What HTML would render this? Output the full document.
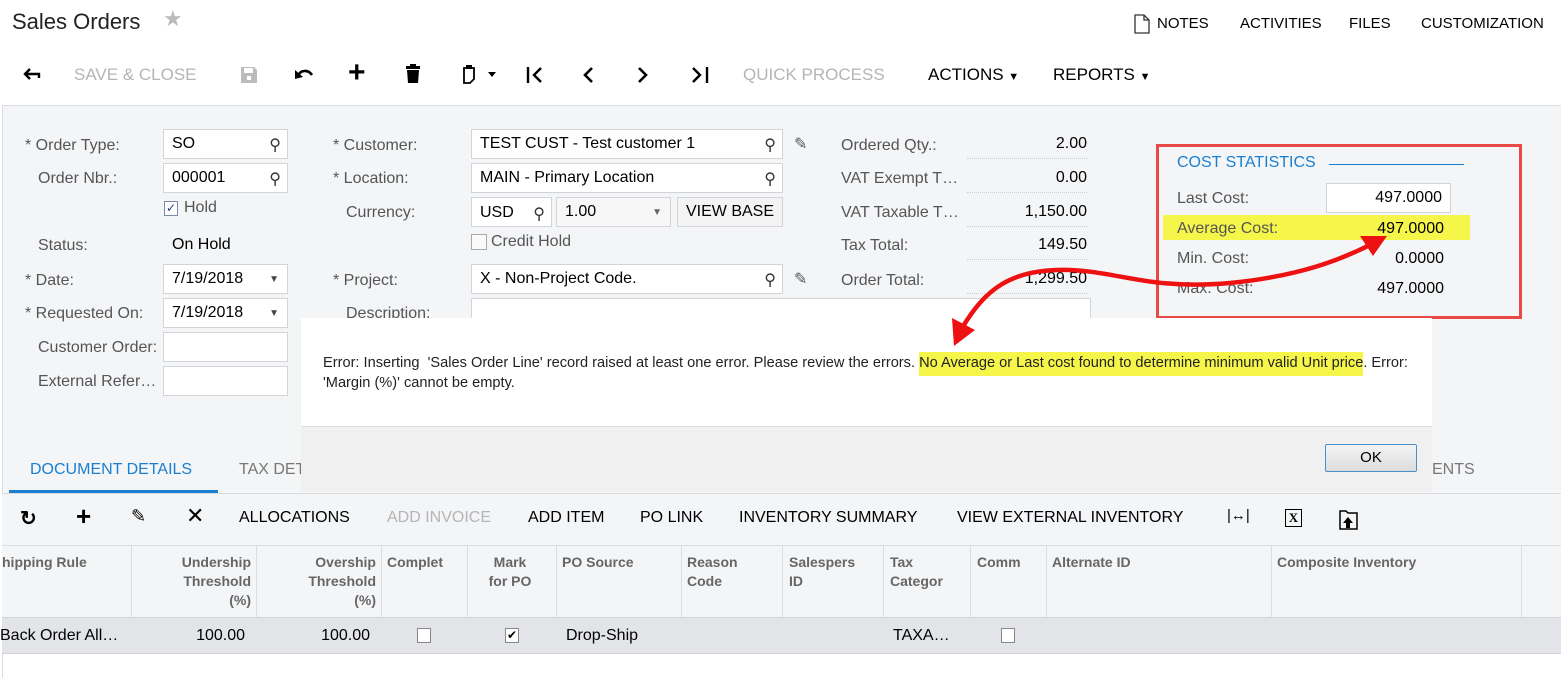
<!DOCTYPE html>
<html><head><meta charset="utf-8">
<style>
*{margin:0;padding:0;box-sizing:border-box}
body{width:1561px;height:678px;overflow:hidden;position:relative;background:#fff;font-family:"Liberation Sans",Arial,sans-serif;color:#000}
.a{position:absolute;white-space:nowrap}
.lbl{position:absolute;font-size:16px;color:#555;white-space:nowrap}
.inp{position:absolute;background:#fff;border:1px solid #d2d4d8;height:30px;font-size:16px;padding:5px 8px;white-space:nowrap}
.ro{position:absolute;font-size:16px;text-align:right;white-space:nowrap;border-bottom:1px dotted #ccc;height:30px;padding-top:6px}
.tb{position:absolute;top:65px;font-size:17px;white-space:nowrap}
.g{color:#b5b5b5}
.hd{position:absolute;top:553px;font-size:14px;font-weight:bold;color:#666;line-height:19px}
.vl{position:absolute;top:545px;width:1px;height:72px;background:#dcdde0}
.tt{position:absolute;top:509px;font-size:16px;white-space:nowrap}
</style></head><body>
<div class="a" style="left:12px;top:9px;font-size:22px;color:#222">Sales Orders</div>
<div class="a" style="left:163px;top:6px;font-size:22px;color:#bbb">★</div>
<svg class="a" style="left:1133px;top:14px" width="18" height="20"><path d="M2 1h9l5 5v13H2z" fill="none" stroke="#333" stroke-width="1.3"/><path d="M11 1v5h5" fill="none" stroke="#333" stroke-width="1.3"/></svg>
<div class="a" style="left:1157px;top:15px;font-size:15px">NOTES</div>
<div class="a" style="left:1240px;top:15px;font-size:15px">ACTIVITIES</div>
<div class="a" style="left:1349px;top:15px;font-size:15px">FILES</div>
<div class="a" style="left:1421px;top:15px;font-size:15px">CUSTOMIZATION</div>
<svg class="a" style="left:21px;top:66px" width="20" height="16"><path d="M18 12V8H5M9 3L4 8l5 5" fill="none" stroke="#000" stroke-width="2.4"/></svg>
<div class="tb g" style="left:74px">SAVE &amp; CLOSE</div>
<svg class="a" style="left:240px;top:66px" width="18" height="18"><path d="M1 1h13l3 3v13H1z" fill="#bbb"/><rect x="4" y="2" width="9" height="5" fill="#fff"/><rect x="7" y="10" width="4" height="4" fill="#fff"/></svg>
<svg class="a" style="left:294px;top:66px" width="20" height="14"><path d="M4 10c2-6 10-7 14-1" fill="none" stroke="#000" stroke-width="2.6"/><path d="M1 4l0 9 8-2z" fill="#000"/></svg>
<div class="a" style="left:348px;top:56px;font-size:30px;font-weight:bold">+</div>
<svg class="a" style="left:405px;top:64px" width="16" height="20"><rect x="1" y="2" width="14" height="3" fill="#000"/><rect x="5" y="0" width="6" height="3" fill="#000"/><path d="M2 6h12l-1 13H3z" fill="#000"/></svg>
<svg class="a" style="left:461px;top:64px" width="36" height="20"><path d="M3 4h10v11l-4 4H3z" fill="none" stroke="#000" stroke-width="1.8"/><rect x="5" y="1" width="6" height="4" fill="#000"/><path d="M27 8h8l-4 5z" fill="#000"/></svg>
<svg class="a" style="left:526px;top:65px" width="20" height="20"><path d="M2 2v16M15 3l-7 7 7 7" fill="none" stroke="#000" stroke-width="2.4"/></svg>
<svg class="a" style="left:580px;top:65px" width="16" height="20"><path d="M12 3l-7 7 7 7" fill="none" stroke="#000" stroke-width="2.6"/></svg>
<svg class="a" style="left:635px;top:65px" width="16" height="20"><path d="M4 3l7 7-7 7" fill="none" stroke="#000" stroke-width="2.6"/></svg>
<svg class="a" style="left:689px;top:65px" width="20" height="20"><path d="M18 2v16M4 3l7 7-7 7" fill="none" stroke="#000" stroke-width="2.4"/></svg>
<div class="tb g" style="left:743px">QUICK PROCESS</div>
<div class="tb" style="left:928px">ACTIONS <span style="font-size:11px">▼</span></div>
<div class="tb" style="left:1053px">REPORTS <span style="font-size:11px">▼</span></div>
<div class="a" style="left:2px;top:105px;width:1559px;height:388px;background:#f4f5f7;border-top:1px solid #dcdde0;border-left:1px solid #dcdde0"></div>
<div class="lbl" style="left:25px;top:137px">* Order Type:</div>
<div class="inp" style="left:163px;top:129px;width:125px">SO<span style="position:absolute;right:6px;color:#333">⚲</span></div>
<div class="lbl" style="left:38px;top:170px">Order Nbr.:</div>
<div class="inp" style="left:163px;top:163px;width:125px">000001<span style="position:absolute;right:6px;color:#333">⚲</span></div>
<div class="a" style="left:164px;top:201px;width:14px;height:15px;border:1px solid #7a8aa8;background:#fff;font-size:12px;line-height:13px;text-align:center;color:#2a3f8a">✓</div>
<div class="lbl" style="left:184px;top:199px">Hold</div>
<div class="lbl" style="left:38px;top:237px">Status:</div>
<div class="a" style="left:172px;top:236px;font-size:16px">On Hold</div>
<div class="lbl" style="left:25px;top:272px">* Date:</div>
<div class="inp" style="left:163px;top:264px;width:125px">7/19/2018<span style="position:absolute;right:8px;font-size:10px;top:9px;color:#444">▼</span></div>
<div class="lbl" style="left:25px;top:305px">* Requested On:</div>
<div class="inp" style="left:163px;top:298px;width:125px">7/19/2018<span style="position:absolute;right:8px;font-size:10px;top:9px;color:#444">▼</span></div>
<div class="lbl" style="left:38px;top:339px">Customer Order:</div>
<div class="inp" style="left:163px;top:332px;width:125px"></div>
<div class="lbl" style="left:38px;top:373px">External Refer…</div>
<div class="inp" style="left:163px;top:366px;width:125px"></div>
<div class="lbl" style="left:333px;top:137px">* Customer:</div>
<div class="inp" style="left:471px;top:129px;width:312px">TEST CUST - Test customer 1<span style="position:absolute;right:6px;color:#333">⚲</span></div>
<div class="a" style="left:794px;top:134px;font-size:16px;color:#555">✎</div>
<div class="lbl" style="left:333px;top:170px">* Location:</div>
<div class="inp" style="left:471px;top:163px;width:312px">MAIN - Primary Location<span style="position:absolute;right:6px;color:#333">⚲</span></div>
<div class="lbl" style="left:346px;top:204px">Currency:</div>
<div class="inp" style="left:471px;top:197px;width:81px;padding-top:6px">USD<span style="position:absolute;right:6px;color:#333">⚲</span></div>
<div class="inp" style="left:556px;top:197px;width:115px;background:#f7f7f7">1.00<span style="position:absolute;right:8px;font-size:10px;top:9px;color:#666">▼</span></div>
<div class="inp" style="left:677px;top:197px;width:106px;background:#f3f3f3">VIEW BASE</div>
<div class="a" style="left:471px;top:234px;width:16px;height:16px;border:1px solid #aaa;background:#fafafa"></div>
<div class="lbl" style="left:491px;top:233px">Credit Hold</div>
<div class="lbl" style="left:333px;top:272px">* Project:</div>
<div class="inp" style="left:471px;top:264px;width:312px">X - Non-Project Code.<span style="position:absolute;right:6px;color:#333">⚲</span></div>
<div class="a" style="left:794px;top:269px;font-size:16px;color:#555">✎</div>
<div class="lbl" style="left:346px;top:305px">Description:</div>
<div class="a" style="left:471px;top:298px;width:620px;height:30px;background:#fff;border:1px solid #d2d4d8"></div>
<div class="lbl" style="left:841px;top:137px">Ordered Qty.:</div><div class="ro" style="left:967px;top:129px;width:120px">2.00</div>
<div class="lbl" style="left:841px;top:170px">VAT Exempt T…</div><div class="ro" style="left:967px;top:163px;width:120px">0.00</div>
<div class="lbl" style="left:841px;top:204px">VAT Taxable T…</div><div class="ro" style="left:967px;top:197px;width:120px">1,150.00</div>
<div class="lbl" style="left:841px;top:237px">Tax Total:</div><div class="ro" style="left:967px;top:230px;width:120px">149.50</div>
<div class="lbl" style="left:841px;top:272px">Order Total:</div><div class="ro" style="left:967px;top:264px;width:120px">1,299.50</div>
<div class="a" style="left:1156px;top:144px;width:366px;height:175px;border:3px solid #e84a48"></div>
<div class="a" style="left:1177px;top:154px;font-size:16px;color:#1a7fd0">COST STATISTICS</div>
<div class="a" style="left:1329px;top:164px;width:135px;height:1px;background:#1a7fd0"></div>
<div class="lbl" style="left:1177px;top:190px">Last Cost:</div>
<div class="inp" style="left:1326px;top:183px;width:125px;text-align:right">497.0000</div>
<div class="a" style="left:1163px;top:215px;width:307px;height:25px;background:#f5f54a"></div>
<div class="lbl" style="left:1177px;top:220px">Average Cost:</div>
<div class="a" style="left:1326px;top:220px;width:118px;text-align:right;font-size:16px">497.0000</div>
<div class="lbl" style="left:1177px;top:250px">Min. Cost:</div>
<div class="a" style="left:1326px;top:250px;width:118px;text-align:right;font-size:16px">0.0000</div>
<div class="lbl" style="left:1177px;top:280px">Max. Cost:</div>
<div class="a" style="left:1326px;top:280px;width:118px;text-align:right;font-size:16px">497.0000</div>
<div class="a" style="left:30px;top:461px;font-size:16px;color:#1a7fd0">DOCUMENT DETAILS</div>
<div class="a" style="left:9px;top:490px;width:209px;height:3px;background:#1a7fd0"></div>
<div class="a" style="left:239px;top:461px;font-size:16px;color:#777">TAX DET</div>
<div class="a" style="left:2px;top:493px;width:1559px;height:1px;background:#d8d9dc"></div>
<div class="a" style="left:301px;top:318px;width:1131px;height:108px;background:#fff"></div>
<div class="a" style="left:301px;top:426px;width:1131px;height:66px;background:#f0f0f0;border-top:1px solid #ddd"></div>
<div class="a" style="left:323px;top:353px;font-size:14.6px;line-height:20px;color:#222">Error: Inserting &nbsp;'Sales Order Line' record raised at least one error. Please review the errors. <span style="background:#f5f54a;padding:3px 0 5px">No Average or Last cost found to determine minimum valid Unit price</span>. Error:<br>'Margin (%)' cannot be empty.</div>
<div class="a" style="left:1325px;top:444px;width:92px;height:28px;border:1px solid #4b8fcf;border-radius:2px;background:linear-gradient(#f4f4f4,#dcdcdc);font-size:15px;text-align:center;line-height:26px">OK</div>
<div class="a" style="left:1432px;top:461px;font-size:16px;color:#777">ENTS</div>
<div class="a" style="left:2px;top:494px;width:1559px;height:51px;background:#f4f5f7"></div>
<div class="tt" style="left:20px;top:506px;font-size:20px;font-weight:bold">↻</div>
<div class="tt" style="left:76px;top:501px;font-size:26px;font-weight:bold">+</div>
<div class="tt" style="left:131px;top:506px;font-size:18px">✎</div>
<div class="tt" style="left:186px;top:503px;font-size:22px">✕</div>
<div class="tt" style="left:239px">ALLOCATIONS</div>
<div class="tt g" style="left:387px">ADD INVOICE</div>
<div class="tt" style="left:528px">ADD ITEM</div>
<div class="tt" style="left:640px">PO LINK</div>
<div class="tt" style="left:739px">INVENTORY SUMMARY</div>
<div class="tt" style="left:957px">VIEW EXTERNAL INVENTORY</div>
<div class="tt" style="left:1227px;top:507px;font-size:15px">|↔|</div>
<div class="a" style="left:1285px;top:509px;width:17px;height:18px;border:1.5px solid #000;font-size:13px;font-weight:bold;text-align:center;line-height:15px;font-family:'Liberation Serif',serif">X</div>
<svg class="a" style="left:1337px;top:507px" width="22" height="24"><path d="M3 4h6l2 2h9v16H3z" fill="none" stroke="#000" stroke-width="1.5"/><path d="M11 10l-5 6h3v5h4v-5h3z" fill="#000"/></svg>
<div class="a" style="left:2px;top:545px;width:1559px;height:72px;background:#f4f5f7;border-top:1px solid #dcdde0"></div>
<div class="vl" style="left:131px"></div><div class="vl" style="left:256px"></div><div class="vl" style="left:381px"></div><div class="vl" style="left:467px"></div><div class="vl" style="left:556px"></div><div class="vl" style="left:681px"></div><div class="vl" style="left:782px"></div><div class="vl" style="left:883px"></div><div class="vl" style="left:970px"></div><div class="vl" style="left:1046px"></div><div class="vl" style="left:1271px"></div><div class="vl" style="left:1521px"></div>
<div class="hd" style="left:2px">hipping Rule</div>
<div class="hd" style="left:140px;width:111px;text-align:right">Undership<br>Threshold<br>(%)</div>
<div class="hd" style="left:265px;width:111px;text-align:right">Overship<br>Threshold<br>(%)</div>
<div class="hd" style="left:387px">Complet</div>
<div class="hd" style="left:470px;width:80px;text-align:center">Mark<br>for PO</div>
<div class="hd" style="left:562px">PO Source</div>
<div class="hd" style="left:687px">Reason<br>Code</div>
<div class="hd" style="left:789px">Salespers<br>ID</div>
<div class="hd" style="left:890px">Tax<br>Categor</div>
<div class="hd" style="left:977px">Comm</div>
<div class="hd" style="left:1052px">Alternate ID</div>
<div class="hd" style="left:1277px">Composite Inventory</div>
<div class="a" style="left:2px;top:617px;width:1559px;height:37px;background:#e2e4e8;border-top:1px solid #d2d4d8;border-bottom:1px solid #cfd1d5"></div>
<div class="a" style="left:0;top:627px;font-size:16px">Back Order All…</div>
<div class="a" style="left:140px;top:627px;width:105px;text-align:right;font-size:16px">100.00</div>
<div class="a" style="left:265px;top:627px;width:105px;text-align:right;font-size:16px">100.00</div>
<div class="a" style="left:417px;top:628px;width:14px;height:15px;border:1px solid #888;background:#fff"></div>
<div class="a" style="left:505px;top:628px;width:14px;height:15px;border:1px solid #888;background:#fff;font-size:12px;line-height:13px;text-align:center">✔</div>
<div class="a" style="left:566px;top:627px;font-size:16px">Drop-Ship</div>
<div class="a" style="left:893px;top:627px;font-size:16px">TAXA…</div>
<div class="a" style="left:1001px;top:628px;width:14px;height:15px;border:1px solid #888;background:#fff"></div>
<div class="a" style="left:2px;top:654px;width:1px;height:24px;background:#dcdde0"></div>
<svg class="a" style="left:0;top:0" width="1561" height="678">
<path d="M962 328 C985 290,1010 268,1070 270 C1120 272,1150 290,1230 283 C1300 276,1340 260,1372 244" fill="none" stroke="#ee1111" stroke-width="4.5" stroke-linecap="round"/>
<path d="M954 346 L952 318 L975 330 Z" fill="#ee1111"/>
<path d="M1387 236 L1360 236 L1373 256 Z" fill="#ee1111"/>
</svg>
</body></html>
